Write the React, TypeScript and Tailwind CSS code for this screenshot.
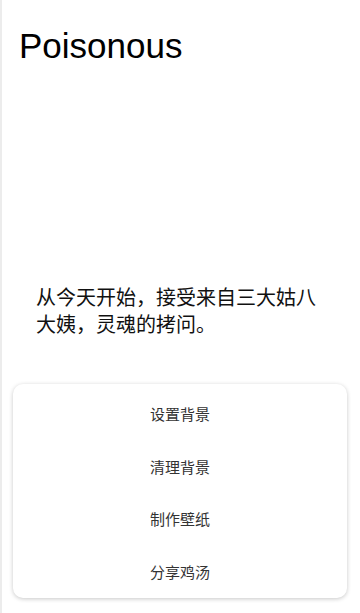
import React from "react";

const menuItems = ["设置背景", "清理背景", "制作壁纸", "分享鸡汤"];

export default function App() {
  return (
    <div className="min-h-[613px] w-[360px] bg-white border-l-2 border-[#ececec] flex flex-col font-['Liberation_Sans','Noto_Sans_CJK_SC',sans-serif]">
      <h1 className="pt-[26px] pl-[17px] text-[35px] leading-[40px] text-black font-normal">
        Poisonous
      </h1>

      <p className="mt-[217px] px-[34px] text-[20px] leading-[27px] text-[#111] font-['Noto_Sans_CJK_SC',sans-serif]">
        从今天开始，接受来自三大姑八大姨，灵魂的拷问。
      </p>

      <div className="mt-[47px] ml-[11px] mr-[13px] mb-[15px] bg-white rounded-[10px] shadow-[0_1px_4px_rgba(0,0,0,0.22)] pt-[4px] flex flex-col">
        {menuItems.map((item) => (
          <button
            key={item}
            className="h-[52.5px] flex items-center justify-center text-[15px] text-[#333] font-['Noto_Sans_CJK_SC',sans-serif]"
          >
            {item}
          </button>
        ))}
      </div>
    </div>
  );
}
